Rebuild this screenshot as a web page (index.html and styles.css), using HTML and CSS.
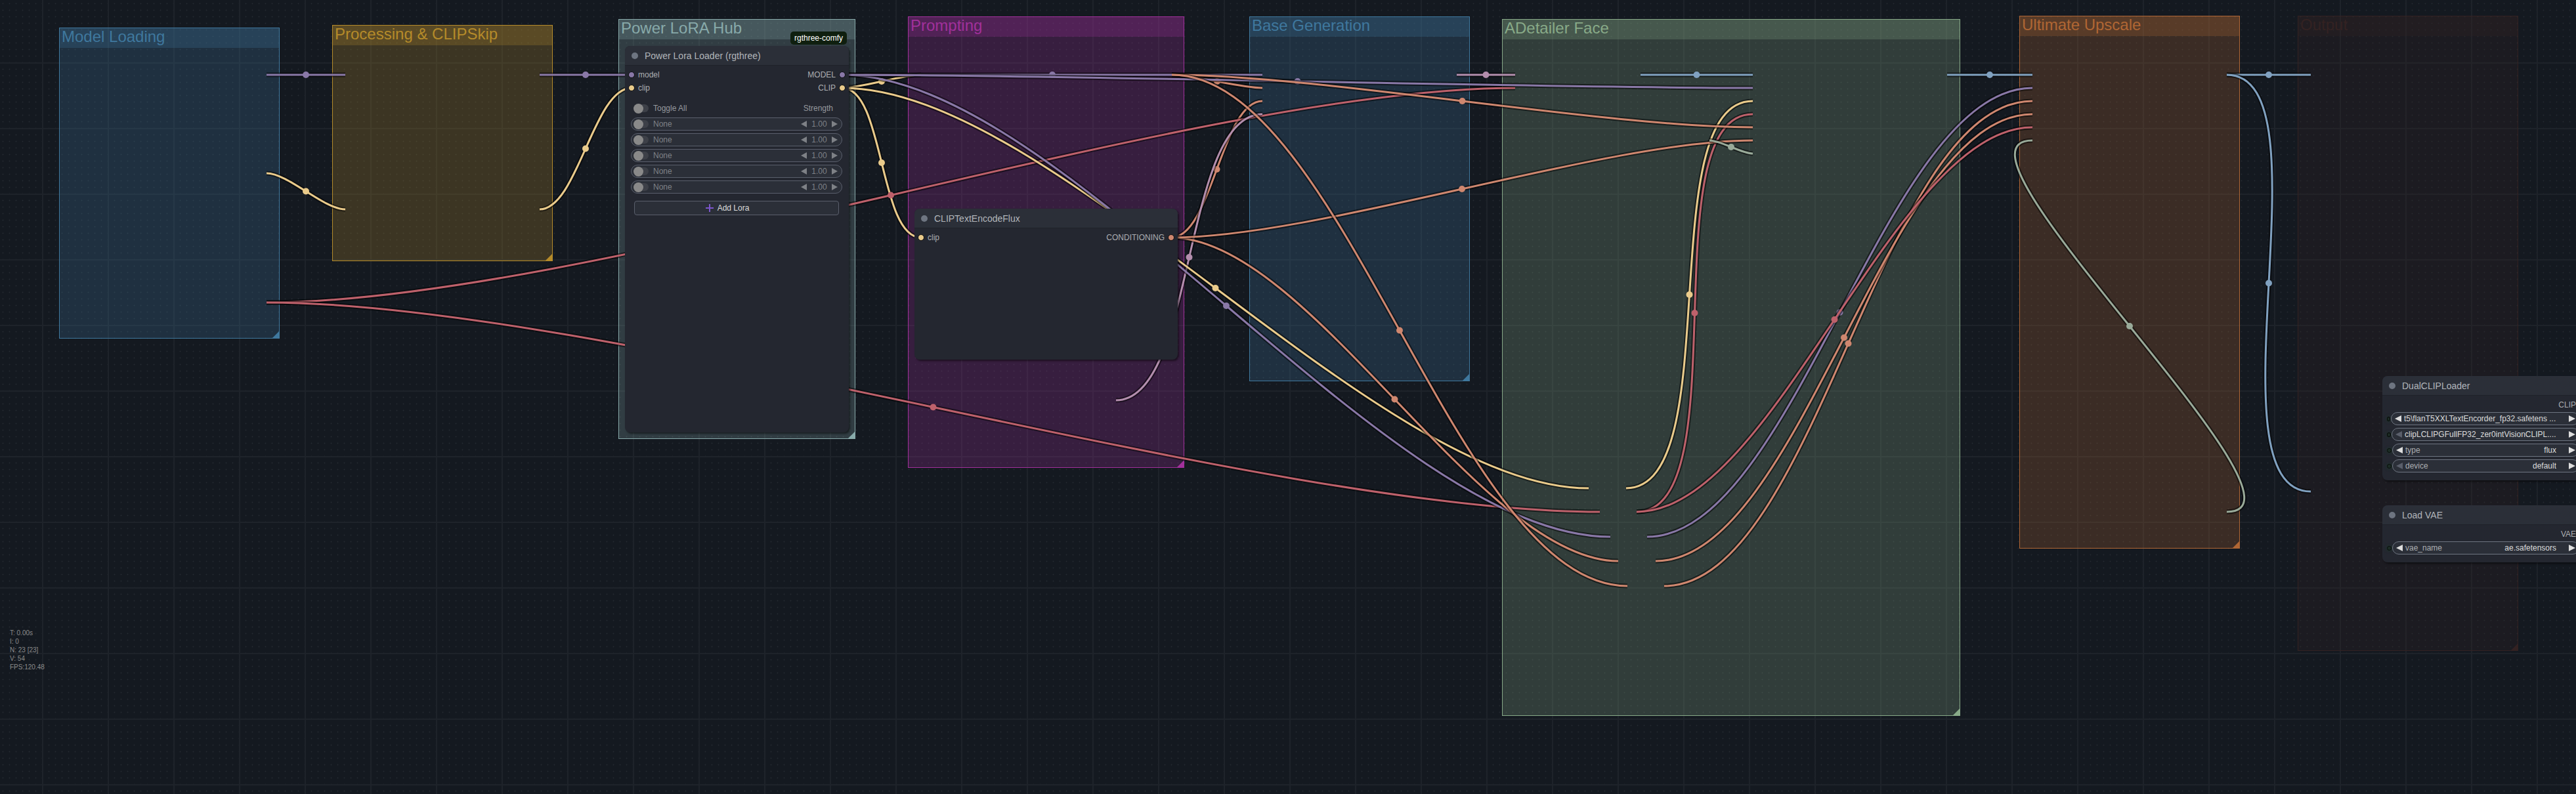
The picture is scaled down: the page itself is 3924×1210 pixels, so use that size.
FILE: index.html
```html
<!DOCTYPE html>
<html lang="en">
<head>
<meta charset="utf-8">
<title>Workflow graph</title>
<link rel="stylesheet" href="styles.css">
</head>
<body>
<main class="canvas">
  <svg class="layer" aria-hidden="true">
    <defs>
      <pattern id="dots" x="4" y="5" width="10" height="10" patternUnits="userSpaceOnUse">
        <path class="dot-arm" d="M9 0h1v1h-1zM1 0h1v1h-1zM0 1h1v1h-1zM0 9h1v1h-1z"/>
        <path class="dot-core" d="M0 0h1v1h-1z"/>
      </pattern>
      <pattern id="lines" x="64" y="95" width="100" height="100" patternUnits="userSpaceOnUse">
        <path class="grid-line" d="M0 0h100v2h-100zM0 2h2v98h-2z"/>
      </pattern>
    </defs>
    <rect width="100%" height="100%" fill="url(#dots)"/>
    <rect width="100%" height="100%" fill="url(#lines)"/>
  </svg>

  <section class="group group-loading"><h2 class="group-title">Model Loading</h2></section>
  <section class="group group-processing"><h2 class="group-title">Processing &amp; CLIPSkip</h2></section>
  <section class="group group-lora"><h2 class="group-title">Power LoRA Hub</h2></section>
  <section class="group group-prompting"><h2 class="group-title">Prompting</h2></section>
  <section class="group group-base"><h2 class="group-title">Base Generation</h2></section>
  <section class="group group-face"><h2 class="group-title">ADetailer Face</h2></section>
  <section class="group group-upscale"><h2 class="group-title">Ultimate Upscale</h2></section>
  <section class="group group-output"><h2 class="group-title">Output</h2></section>

  <svg class="layer" id="links" aria-hidden="true"></svg>

  <article class="node node-lora">
    <span class="badge">rgthree-comfy</span>
    <header class="node-head"><i class="node-dot"></i><h3 class="node-title">Power Lora Loader (rgthree)</h3></header>
    <div class="slots">
      <div class="slot"><i class="pin pin-model"></i>model<span class="slot-out">MODEL</span><i class="pin pin-model"></i></div>
      <div class="slot"><i class="pin pin-clip"></i>clip<span class="slot-out">CLIP</span><i class="pin pin-clip"></i></div>
    </div>
    <div class="loras">
      <div class="lora-head"><input class="toggle" type="checkbox" id="all"><label class="lora-all" for="all">Toggle All</label><span>Strength</span></div>
      <div class="lora"><input class="toggle" type="checkbox" aria-label="Enable lora 1"><button class="lora-name">None</button><button class="step" aria-label="Decrease"><svg class="tri" viewBox="0 0 9 10"><path d="M9 0v10L0 5z"/></svg></button><input class="strength" type="text" value="1.00" aria-label="Strength 1"><button class="step" aria-label="Increase"><svg class="tri" viewBox="0 0 9 10"><path d="M0 0v10l9-5z"/></svg></button></div>
      <div class="lora"><input class="toggle" type="checkbox" aria-label="Enable lora 2"><button class="lora-name">None</button><button class="step" aria-label="Decrease"><svg class="tri" viewBox="0 0 9 10"><path d="M9 0v10L0 5z"/></svg></button><input class="strength" type="text" value="1.00" aria-label="Strength 2"><button class="step" aria-label="Increase"><svg class="tri" viewBox="0 0 9 10"><path d="M0 0v10l9-5z"/></svg></button></div>
      <div class="lora"><input class="toggle" type="checkbox" aria-label="Enable lora 3"><button class="lora-name">None</button><button class="step" aria-label="Decrease"><svg class="tri" viewBox="0 0 9 10"><path d="M9 0v10L0 5z"/></svg></button><input class="strength" type="text" value="1.00" aria-label="Strength 3"><button class="step" aria-label="Increase"><svg class="tri" viewBox="0 0 9 10"><path d="M0 0v10l9-5z"/></svg></button></div>
      <div class="lora"><input class="toggle" type="checkbox" aria-label="Enable lora 4"><button class="lora-name">None</button><button class="step" aria-label="Decrease"><svg class="tri" viewBox="0 0 9 10"><path d="M9 0v10L0 5z"/></svg></button><input class="strength" type="text" value="1.00" aria-label="Strength 4"><button class="step" aria-label="Increase"><svg class="tri" viewBox="0 0 9 10"><path d="M0 0v10l9-5z"/></svg></button></div>
      <div class="lora"><input class="toggle" type="checkbox" aria-label="Enable lora 5"><button class="lora-name">None</button><button class="step" aria-label="Decrease"><svg class="tri" viewBox="0 0 9 10"><path d="M9 0v10L0 5z"/></svg></button><input class="strength" type="text" value="1.00" aria-label="Strength 5"><button class="step" aria-label="Increase"><svg class="tri" viewBox="0 0 9 10"><path d="M0 0v10l9-5z"/></svg></button></div>
      <button class="add"><svg class="plus" viewBox="0 0 12 12"><path d="M6 0v12M0 6h12"/></svg>Add Lora</button>
    </div>
  </article>

  <article class="node node-encode">
    <header class="node-head"><i class="node-dot"></i><h3 class="node-title">CLIPTextEncodeFlux</h3></header>
    <div class="slots">
      <div class="slot"><i class="pin pin-clip"></i>clip<span class="slot-out">CONDITIONING</span><i class="pin pin-cond"></i></div>
    </div>
  </article>

  <article class="node node-dual">
    <header class="node-head"><i class="node-dot"></i><h3 class="node-title">DualCLIPLoader</h3></header>
    <div class="slots"><div class="slot"><span class="slot-out">CLIP</span><i class="pin pin-clip"></i></div></div>
    <div class="combos">
      <div class="combo-row"><i class="ring"></i><div class="combo"><button class="step" aria-label="Previous"><svg class="tri tri-big" viewBox="0 0 10 10"><path d="M10 0v10L0 5z"/></svg></button><select class="pick pick-file" aria-label="clip_name1"><option>t5\flanT5XXLTextEncorder_fp32.safetens ...</option></select><button class="step" aria-label="Next"><svg class="tri tri-big" viewBox="0 0 10 10"><path d="M0 0v10l10-5z"/></svg></button></div></div>
      <div class="combo-row"><i class="ring"></i><div class="combo"><button class="step" aria-label="Previous" disabled><svg class="tri tri-big" viewBox="0 0 10 10"><path d="M10 0v10L0 5z"/></svg></button><select class="pick pick-file" aria-label="clip_name2"><option>clipLCLIPGFullFP32_zer0intVisionCLIPL....</option></select><button class="step" aria-label="Next"><svg class="tri tri-big" viewBox="0 0 10 10"><path d="M0 0v10l10-5z"/></svg></button></div></div>
      <div class="combo-row"><i class="ring"></i><div class="combo"><button class="step" aria-label="Previous"><svg class="tri tri-big" viewBox="0 0 10 10"><path d="M10 0v10L0 5z"/></svg></button><label for="type">type</label><select class="pick" id="type"><option>flux</option></select><button class="step" aria-label="Next"><svg class="tri tri-big" viewBox="0 0 10 10"><path d="M0 0v10l10-5z"/></svg></button></div></div>
      <div class="combo-row"><i class="ring"></i><div class="combo"><button class="step" aria-label="Previous" disabled><svg class="tri tri-big" viewBox="0 0 10 10"><path d="M10 0v10L0 5z"/></svg></button><label for="device">device</label><select class="pick" id="device"><option>default</option></select><button class="step" aria-label="Next"><svg class="tri tri-big" viewBox="0 0 10 10"><path d="M0 0v10l10-5z"/></svg></button></div></div>
    </div>
  </article>

  <article class="node node-vae">
    <header class="node-head"><i class="node-dot"></i><h3 class="node-title">Load VAE</h3></header>
    <div class="slots"><div class="slot"><span class="slot-out">VAE</span><i class="pin pin-vae"></i></div></div>
    <div class="combos">
      <div class="combo-row"><i class="ring"></i><div class="combo"><button class="step" aria-label="Previous"><svg class="tri tri-big" viewBox="0 0 10 10"><path d="M10 0v10L0 5z"/></svg></button><label for="vae">vae_name</label><select class="pick" id="vae"><option>ae.safetensors</option></select><button class="step" aria-label="Next"><svg class="tri tri-big" viewBox="0 0 10 10"><path d="M0 0v10l10-5z"/></svg></button></div></div>
    </div>
  </article>

  <aside class="stats">
    <div>T: 0.00s</div>
    <div>I: 0</div>
    <div>N: 23 [23]</div>
    <div>V: 54</div>
    <div>FPS:120.48</div>
  </aside>
</main>
<script src="links.js"></script>
</body>
</html>
```
FILE: links.js
```js
// Every link: type, then the output pin and the input pin it joins.
// They are painted in this order, so later links lie on top.
const links = [
  ["model", 406, 114, 526, 114],
  ["clip", 406, 264, 526, 319],
  ["model", 822, 114, 962, 114],
  ["clip", 822, 319, 962, 134],
  ["clip", 1283, 134, 1403, 114],
  ["clip", 1283, 134, 1403, 362],
  ["model", 1283, 114, 1923, 114],
  ["cond", 1785, 114, 1923, 134],
  ["cond", 1784, 362, 1923, 154],
  ["vae", 406, 461, 2308, 134],
  ["latent", 1700, 610, 1923, 174],
  ["latent", 2219, 114, 2308, 114],
  ["clip", 1283, 134, 2420, 744],
  ["vae", 406, 461, 2437, 780],
  ["model", 1283, 114, 2453, 818],
  ["cond", 1784, 362, 2465, 855],
  ["image", 2499, 114, 2670, 114],
  ["model", 1283, 114, 2670, 134],
  ["clip", 2477, 744, 2670, 154],
  ["vae", 2493, 780, 2670, 174],
  ["cond", 1785, 114, 2670, 194],
  ["cond", 1784, 362, 2670, 214],
  ["cond", 1785, 114, 2479, 893],
  ["other", 2604, 214, 2670, 234],
  ["image", 2966, 114, 3096, 114],
  ["model", 2509, 818, 3096, 134],
  ["cond", 2535, 893, 3096, 154],
  ["cond", 2522, 855, 3096, 174],
  ["vae", 2493, 780, 3096, 194],
  ["other", 3392, 780, 3096, 214],
  ["image", 3392, 114, 3520, 114],
  ["image", 3392, 114, 3520, 749]
];

const layer = document.getElementById("links");

function add(name, attributes) {
  const element = document.createElementNS("http://www.w3.org/2000/svg", name);
  for (const key in attributes) element.setAttribute(key, attributes[key]);
  layer.appendChild(element);
}

for (const [type, x1, y1, x2, y2] of links) {
  const reach = Math.hypot(x2 - x1, y2 - y1) / 4;
  const d = `M${x1} ${y1}C${x1 + reach} ${y1} ${x2 - reach} ${y2} ${x2} ${y2}`;
  add("path", { class: "link-shade", d });
  add("path", { class: `link link-${type}`, d });
  add("circle", { class: `knot knot-${type}`, cx: (x1 + x2) / 2, cy: (y1 + y2) / 2, r: 5 });
}
```
FILE: styles.css
```css
:root {
  --model: #8978a7;
  --clip: #eacb8b;
  --cond: #cf876f;
  --vae: #be616b;
  --latent: #b38ead;
  --image: #80a1c0;
  --other: #99aa99;
}

* { box-sizing: border-box; }

body {
  margin: 0;
  background: #141920;
  font: 12px/20px "Liberation Sans", Arial, sans-serif;
}

button, input, select {
  margin: 0;
  padding: 0;
  border: 0;
  background: none;
  color: inherit;
  font: inherit;
}

.canvas {
  position: relative;
  min-height: 100vh;
  overflow: hidden;
}

.layer {
  position: absolute;
  inset: 0;
  width: 100%;
  height: 100%;
}

.grid-line { fill: #1e232a; }
.dot-core { fill: #252b32; }
.dot-arm { fill: #1b2027; }

/* Groups: places on the free canvas */
.group {
  position: absolute;
  border: 1px solid var(--tone);
  background: color-mix(in srgb, var(--tone) 25%, transparent);
}

.group::after {
  content: "";
  position: absolute;
  right: 0;
  bottom: 0;
  width: 10px;
  height: 10px;
  background: var(--tone);
  clip-path: polygon(100% 0, 100% 100%, 0 100%);
}

.group-title {
  margin: 0;
  padding: 0 0 4px 3px;
  background: color-mix(in srgb, var(--tone) 25%, transparent);
  color: var(--tone);
  font-size: 24px;
  font-weight: 400;
  line-height: 26px;
}

.group-loading { --tone: #3f789e; left: 90px; top: 42px; width: 336px; height: 474px; }
.group-processing { --tone: #b58b2a; left: 506px; top: 38px; width: 336px; height: 360px; }
.group-lora { --tone: #88aaaa; left: 942px; top: 29px; width: 361px; height: 640px; }
.group-prompting { --tone: #a1309b; left: 1383px; top: 25px; width: 421px; height: 688px; }
.group-base { --tone: #3f789e; left: 1903px; top: 25px; width: 336px; height: 556px; }
.group-face { --tone: #88aa88; left: 2288px; top: 29px; width: 698px; height: 1062px; }
.group-upscale { --tone: #b06634; left: 3076px; top: 24px; width: 336px; height: 812px; }
.group-output { --tone: #332222; left: 3500px; top: 24px; width: 336px; height: 968px; }

/* Links */
.link-shade { fill: none; stroke: rgba(0, 0, 0, 0.5); stroke-width: 7px; }
.link { fill: none; stroke-width: 3px; }
.link-model { stroke: var(--model); }
.link-clip { stroke: var(--clip); }
.link-cond { stroke: var(--cond); }
.link-vae { stroke: var(--vae); }
.link-latent { stroke: var(--latent); }
.link-image { stroke: var(--image); }
.link-other { stroke: var(--other); }
.knot-model { fill: var(--model); }
.knot-clip { fill: var(--clip); }
.knot-cond { fill: var(--cond); }
.knot-vae { fill: var(--vae); }
.knot-latent { fill: var(--latent); }
.knot-image { fill: var(--image); }
.knot-other { fill: var(--other); }

/* Nodes */
.node {
  position: absolute;
  border-radius: 8px;
  background: #242730;
  box-shadow: 2px 2px 3px rgba(0, 0, 0, 0.5);
  color: #acaeb2;
}

.node-lora { left: 952px; top: 70px; width: 341px; height: 589px; }
.node-encode { left: 1393px; top: 318px; width: 401px; height: 230px; }
.node-dual { left: 3629px; top: 573px; width: 315px; }
.node-vae { left: 3629px; top: 770px; width: 315px; }

.badge {
  position: absolute;
  right: 3px;
  bottom: calc(100% + 2px);
  padding: 0 6px;
  border-radius: 5px;
  background: #0f1f0f;
  color: #ffffff;
}

.node-head {
  display: flex;
  align-items: center;
  gap: 10px;
  height: 30px;
  padding-left: 10px;
  border-bottom: 1px solid #1f2229;
  border-radius: 8px 8px 0 0;
  background: #2b2f38;
}

.node-dot {
  width: 10px;
  height: 10px;
  border-radius: 50%;
  background: #6e7581;
}

.node-title {
  margin: 0;
  color: #b2b6bb;
  font-size: 14px;
  font-weight: 400;
}

.slots { padding: 4px 5px 0; }

.slot {
  display: flex;
  align-items: center;
  gap: 5px;
  height: 20px;
}

.slot-out { margin-left: auto; }

.pin {
  width: 10px;
  height: 10px;
  border: 1px solid #0c0d10;
  border-radius: 50%;
}

.pin-model { background: var(--model); }
.pin-clip { background: var(--clip); }
.pin-cond { background: var(--cond); }
.pin-vae { background: var(--vae); }

/* Lora list */
.loras {
  display: flex;
  flex-direction: column;
  gap: 4px;
  padding: 11px 10px 0 9px;
}

.lora-head {
  display: flex;
  align-items: center;
  height: 20px;
  padding: 0 14px 0 4px;
  color: #96999e;
}

.lora-all { flex: 1; }

.lora {
  display: flex;
  align-items: center;
  height: 20px;
  padding: 0 6px 0 3px;
  border-radius: 10px;
  border: 1px solid #5a5f6c;
  background: #2b2f38;
  color: #7e8187;
}

.toggle {
  appearance: none;
  display: grid;
  align-items: center;
  width: 23px;
  height: 15px;
  margin-right: 7px;
}

.toggle::before,
.toggle::after {
  content: "";
  grid-area: 1 / 1;
}

.toggle::before {
  height: 12px;
  margin-left: 2px;
  border-radius: 6px;
  background: #3d4048;
}

.toggle::after {
  width: 15px;
  height: 15px;
  border-radius: 50%;
  background: #898989;
}

.lora-name {
  flex: 1;
  text-align: left;
}

.step {
  display: flex;
  align-items: center;
  color: #dddddd;
}

.step:disabled { color: #5a5f6b; }
.lora .step { color: #7e8186; }

.tri {
  width: 9px;
  height: 10px;
  fill: currentColor;
}

.tri-big { width: 10px; }

.strength {
  width: 38px;
  text-align: center;
}

.add {
  display: flex;
  align-items: center;
  justify-content: center;
  gap: 6px;
  height: 22px;
  margin: 7px 5px 0;
  padding-right: 28px;
  border: 1px solid #5a5f6c;
  border-radius: 4px;
  background: #2b2f38;
  color: #dddddd;
}

.plus {
  width: 12px;
  height: 12px;
  fill: none;
  stroke: #7c56cc;
  stroke-width: 2px;
}

/* Combo widgets */
.combos {
  display: flex;
  flex-direction: column;
  gap: 4px;
  padding: 1px 15px 12px 7px;
}

.combo-row {
  display: flex;
  align-items: center;
  gap: 1px;
}

.ring {
  width: 7px;
  height: 7px;
  border: 1px solid #080b09;
  border-radius: 50%;
  background: #1c2c25;
  box-shadow: 0 0 4px #1b3a2a;
}

.combo {
  display: flex;
  flex: 1;
  align-items: center;
  gap: 4px;
  height: 20px;
  padding: 0 5px;
  border: 1px solid #6e7581;
  border-radius: 10px;
  background: #2b2f38;
}

.pick {
  appearance: none;
  flex: 1;
  min-width: 0;
  height: 18px;
  margin-right: 15px;
  color: #dddddd;
  line-height: 18px;
  text-align-last: right;
}

.pick-file { text-align-last: left; }

/* Render statistics, pinned to the corner of the view */
.stats {
  position: absolute;
  left: 15px;
  bottom: 187px;
  color: #8c8c8c;
  font-size: 10px;
  line-height: 13px;
}
```
